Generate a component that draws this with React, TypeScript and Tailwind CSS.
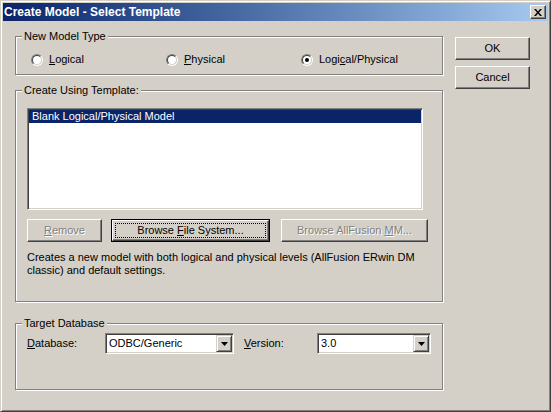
import type { ReactNode } from 'react';

function Group({ label, className, children }: { label: string; className: string; children: ReactNode }) {
  return (
    <div className={`relative border border-[#808080] shadow-[1px_1px_0_#fff,inset_1px_1px_0_#fff] ${className}`}>
      <span className="absolute left-[6px] top-[-8px] px-[2px] bg-[#d4d0c8] leading-[14px]">{label}</span>
      {children}
    </div>
  );
}

function Radio({ checked, children }: { checked?: boolean; children: ReactNode }) {
  return (
    <div className="w-[135px] h-[13px] flex items-center">
      <div className="w-[12px] h-[12px] rounded-full border border-t-[#808080] border-l-[#808080] border-r-white border-b-white">
        <div className="w-full h-full rounded-full border border-t-[#404040] border-l-[#404040] border-r-[#d4d0c8] border-b-[#d4d0c8] bg-white flex items-center justify-center">
          {checked && <div className="w-[4px] h-[4px] rounded-full bg-black" />}
        </div>
      </div>
      <span className="ml-[6px] leading-[13px]">{children}</span>
    </div>
  );
}

function Button({ className, disabled, isDefault, children }: { className: string; disabled?: boolean; isDefault?: boolean; children: ReactNode }) {
  const face = (
    <div className="relative w-full h-full bg-[#d4d0c8] border border-t-white border-l-white border-r-[#404040] border-b-[#404040] shadow-[inset_-1px_-1px_0_#808080] flex items-center justify-center">
      {isDefault && <span className="absolute inset-[2px] border border-dotted border-black" />}
      <span className={disabled ? 'text-[#808080] [text-shadow:1px_1px_0_#fff]' : 'text-black'}>{children}</span>
    </div>
  );
  if (isDefault) {
    return <div className={`h-[23px] border border-black ${className}`}>{face}</div>;
  }
  return <div className={`h-[23px] ${className}`}>{face}</div>;
}

function Combo({ className, value }: { className: string; value: string }) {
  return (
    <div className={`h-[21px] bg-white border border-t-[#808080] border-l-[#808080] border-r-white border-b-white shadow-[inset_1px_1px_0_#404040,inset_-1px_-1px_0_#d4d0c8] p-[1px] flex items-center ${className}`}>
      <span className="flex-1 pl-[2px] leading-[17px]">{value}</span>
      <div className="w-[16px] h-[17px] bg-[#d4d0c8] border border-t-[#d4d0c8] border-l-[#d4d0c8] border-r-[#404040] border-b-[#404040] shadow-[inset_1px_1px_0_#fff,inset_-1px_-1px_0_#808080] flex items-center justify-center">
        <svg width="7" height="4" viewBox="0 0 7 4">
          <path d="M0 0h7L3.5 4z" fill="#000" />
        </svg>
      </div>
    </div>
  );
}

export default function App() {
  return (
    <div className="w-[551px] h-[412px] bg-[#d4d0c8] border border-t-[#d4d0c8] border-l-[#d4d0c8] border-r-[#404040] border-b-[#404040] shadow-[inset_1px_1px_0_#fff,inset_-1px_-1px_0_#808080] p-[2px] font-['Liberation_Sans',Arial,sans-serif] text-[11px] text-black overflow-hidden">
      {/* Title bar */}
      <div className="h-[18px] flex items-center bg-linear-to-r from-[#0a246a] to-[#a6caf0] pl-[1px] pr-[2px]">
        <span className="text-white font-bold text-[12px] leading-[18px]">Create Model - Select Template</span>
        <div className="ml-auto w-[16px] h-[14px] bg-[#d4d0c8] border border-t-white border-l-white border-r-[#404040] border-b-[#404040] shadow-[inset_-1px_-1px_0_#808080] flex items-center justify-center">
          <svg width="8" height="7" viewBox="0 0 8 7">
            <path d="M0 0h2l2 2.5L6 0h2L5 3.5 8 7H6L4 4.5 2 7H0l3-3.5z" fill="#000" />
          </svg>
        </div>
      </div>

      <div className="flex pl-[12px] pt-[15px]">
        <div className="w-[428px] flex flex-col">
          <Group label="New Model Type" className="w-[428px] h-[39px] flex pl-[15px] pt-[16px]">
            <Radio>
              <span className="underline">L</span>ogical
            </Radio>
            <Radio>
              <span className="underline">P</span>hysical
            </Radio>
            <Radio checked>
              Logi<span className="underline">c</span>al/Physical
            </Radio>
          </Group>

          <Group label="Create Using Template:" className="mt-[15px] w-[428px] h-[212px] pl-[11px] pt-[17px]">
            <div className="w-[396px] h-[102px] bg-white border border-t-[#808080] border-l-[#808080] border-r-white border-b-white shadow-[inset_1px_1px_0_#404040,inset_-1px_-1px_0_#d4d0c8] p-[1px]">
              <div className="h-[13px] bg-[#0a246a] text-white pl-[3px] leading-[13px]">Blank Logical/Physical Model</div>
            </div>
            <div className="mt-[9px] flex">
              <Button className="w-[75px]" disabled>
                <span className="underline">R</span>emove
              </Button>
              <Button className="ml-[9px] w-[159px]" isDefault>
                Browse <span className="underline">F</span>ile System...
              </Button>
              <Button className="ml-[11px] w-[147px]" disabled>
                Browse AllFusion <span className="underline">M</span>M...
              </Button>
            </div>
            <p className="mt-[9px] leading-[13px] whitespace-nowrap">
              Creates a new model with both logical and physical levels (AllFusion ERwin DM
              <br />
              classic) and default settings.
            </p>
          </Group>

          <Group label="Target Database" className="mt-[21px] w-[428px] h-[67px] pl-[11px] pt-[9px]">
            <div className="flex items-center h-[21px]">
              <span className="w-[78px]">
                <span className="underline">D</span>atabase:
              </span>
              <Combo className="w-[129px]" value="ODBC/Generic" />
              <span className="ml-[10px] w-[73px]">
                <span className="underline">V</span>ersion:
              </span>
              <Combo className="w-[114px]" value="3.0" />
            </div>
          </Group>
        </div>

        <div className="ml-[12px] mt-[1px] flex flex-col">
          <Button className="w-[75px]">OK</Button>
          <Button className="mt-[6px] w-[75px]">Cancel</Button>
        </div>
      </div>
    </div>
  );
}
